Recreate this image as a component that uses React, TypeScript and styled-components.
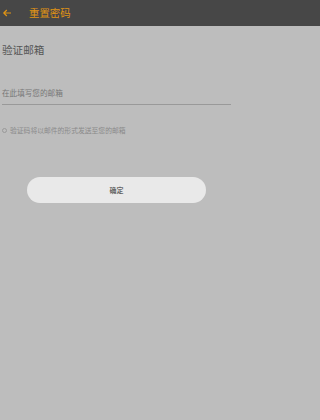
import React from "react";
import styled, { createGlobalStyle } from "styled-components";

const Global = createGlobalStyle`
  html, body { margin: 0; padding: 0; background: #bdbdbd; }
  body { font-family: "Noto Sans CJK SC", "Noto Sans", sans-serif; }
  #root { width: 100%; height: 420px; }
`;

const Page = styled.div`
  width: 100%;
  height: 420px;
  background: #bdbdbd;
  display: flex;
  flex-direction: column;
  overflow: hidden;
`;

const Header = styled.header`
  height: 26px;
  background: #474747;
  display: flex;
  align-items: center;
  padding-left: 2px;
  gap: 12px;
  flex-shrink: 0;
`;

const BackButton = styled.span`
  display: flex;
  align-items: center;
  width: 10px;
  height: 10px;
`;

const Title = styled.h1`
  margin: 0 0 0 5px;
  font-size: 10.4px;
  font-weight: 400;
  color: #e09414;
  line-height: 1;
`;

const Content = styled.main`
  display: flex;
  flex-direction: column;
  width: 229px;
  padding: 0 0 0 2px;
`;

const SectionTitle = styled.h2`
  margin: 17px 0 0;
  font-size: 10.6px;
  font-weight: 400;
  color: #555;
  line-height: 13px;
`;

const Field = styled.div`
  margin-top: 28px;
  height: 17px;
  border-bottom: 1px solid #999;
  display: flex;
  align-items: center;
  padding-bottom: 3px;
`;

const Placeholder = styled.span`
  font-size: 7.6px;
  color: #777;
  line-height: 1;
`;

const Hint = styled.p`
  margin: 22px 0 0;
  display: flex;
  align-items: center;
  gap: 3px;
  font-size: 6.8px;
  color: #8a8a8a;
  line-height: 1;
`;

const Dot = styled.span`
  width: 3px;
  height: 3px;
  border: 0.6px solid #999;
  border-radius: 50%;
`;

const ButtonRow = styled.div`
  display: flex;
  padding-left: 25px;
  margin-top: 43px;
`;

const ConfirmButton = styled.button`
  width: 179px;
  height: 26px;
  border: none;
  border-radius: 13px;
  background: #e9e9e9;
  color: #666;
  font-family: inherit;
  font-size: 7px;
  font-weight: 700;
  padding: 0;
`;

export default function App() {
  return (
    <>
      <Global />
      <Page>
        <Header>
          <BackButton>
            <svg width="10" height="10" viewBox="0 0 10 10">
              <path d="M9 5H1.8M4.8 2L1.8 5l3 3" stroke="#e09414" strokeWidth="1.2" fill="none" />
            </svg>
          </BackButton>
          <Title>重置密码</Title>
        </Header>
        <Content>
          <SectionTitle>验证邮箱</SectionTitle>
          <Field>
            <Placeholder>在此填写您的邮箱</Placeholder>
          </Field>
          <Hint>
            <Dot />
            验证码将以邮件的形式发送至您的邮箱
          </Hint>
          <ButtonRow>
            <ConfirmButton>确定</ConfirmButton>
          </ButtonRow>
        </Content>
      </Page>
    </>
  );
}
